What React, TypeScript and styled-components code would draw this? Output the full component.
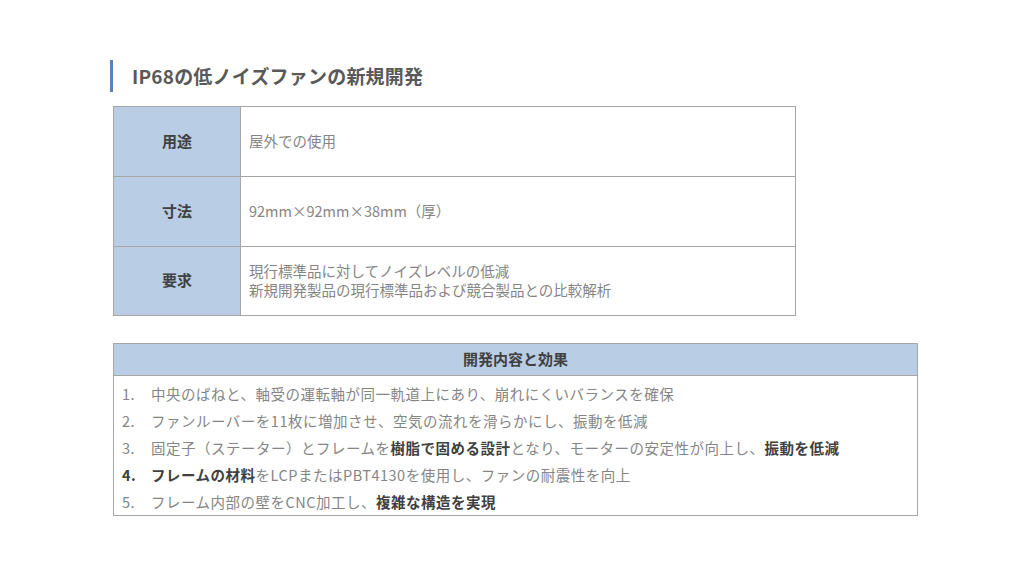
import React from 'react';
import styled, { createGlobalStyle } from 'styled-components';

const GlobalStyle = createGlobalStyle`
    html, body {
        margin: 0;
        padding: 0;
        background: #ffffff;
    }
    body {
        font-family: "Noto Sans CJK JP", "Noto Sans", sans-serif;
    }
`;

const Page = styled.div`
    display: flex;
    flex-direction: column;
    align-items: flex-start;
    width: 1024px;
    height: 576px;
    box-sizing: border-box;
    padding: 60px 0 0 110px;
    background: #ffffff;
`;

const Title = styled.h1`
    margin: 0;
    height: 32px;
    display: flex;
    align-items: center;
    padding: 0 0 2px 19px;
    box-sizing: border-box;
    border-left: 3px solid #5b83bb;
    font-size: 19px;
    font-weight: bold;
    color: #595959;
    letter-spacing: 0.2px;
`;

const SpecTable = styled.div`
    margin: 14px 0 0 3px;
    width: 683px;
    display: grid;
    grid-template-columns: 127px 1fr;
    border: 1px solid #a6a6a6;
    box-sizing: border-box;
`;

const Label = styled.div<{ last?: boolean }>`
    height: ${p => (p.last ? '68px' : '70px')};
    display: flex;
    align-items: center;
    justify-content: center;
    padding-bottom: 3px;
    box-sizing: border-box;
    background: #b9cde5;
    border-right: 1px solid #a6a6a6;
    border-bottom: ${p => (p.last ? 'none' : '1px solid #a6a6a6')};
    font-size: 15px;
    font-weight: bold;
    color: #404040;
`;

const Value = styled.div<{ last?: boolean }>`
    height: ${p => (p.last ? '68px' : '70px')};
    display: flex;
    flex-direction: column;
    justify-content: center;
    padding: 0 0 3px 8px;
    box-sizing: border-box;
    border-bottom: ${p => (p.last ? 'none' : '1px solid #a6a6a6')};
    font-size: 14.5px;
    line-height: 19px;
    color: #858585;
`;

const EffectBox = styled.div`
    margin: 27px 0 0 3px;
    width: 805px;
    border: 1px solid #a6a6a6;
    box-sizing: border-box;
`;

const EffectHeader = styled.div`
    height: 32px;
    display: flex;
    align-items: center;
    justify-content: center;
    padding-bottom: 2px;
    box-sizing: border-box;
    background: #b9cde5;
    border-bottom: 1px solid #a6a6a6;
    font-size: 15px;
    font-weight: bold;
    color: #404040;
`;

const EffectList = styled.ol`
    list-style: none;
    margin: 0;
    padding: 4px 0 0 0;
`;

const EffectItem = styled.li`
    display: flex;
    height: 27px;
    align-items: center;
    padding-left: 8px;
    font-size: 14.5px;
    letter-spacing: 0.5px;
    color: #858585;
`;

const Num = styled.span<{ strong?: boolean }>`
    width: 29px;
    flex-shrink: 0;
    font-weight: ${p => (p.strong ? 'bold' : 'normal')};
    color: ${p => (p.strong ? '#404040' : '#858585')};
`;

const B = styled.b`
    font-weight: bold;
    color: #404040;
`;

const specs = [
    { label: '用途', lines: ['屋外での使用'] },
    { label: '寸法', lines: ['92mm×92mm×38mm（厚）'] },
    {
        label: '要求',
        lines: ['現行標準品に対してノイズレベルの低減', '新規開発製品の現行標準品および競合製品との比較解析'],
    },
];

export default function App() {
    return (
        <>
            <GlobalStyle />
            <Page>
                <Title>IP68の低ノイズファンの新規開発</Title>
                <SpecTable>
                    {specs.map((s, idx) => (
                        <React.Fragment key={s.label}>
                            <Label last={idx === specs.length - 1}>{s.label}</Label>
                            <Value last={idx === specs.length - 1}>
                                {s.lines.map(l => <span key={l}>{l}</span>)}
                            </Value>
                        </React.Fragment>
                    ))}
                </SpecTable>
                <EffectBox>
                    <EffectHeader>開発内容と効果</EffectHeader>
                    <EffectList>
                        <EffectItem>
                            <Num>1.</Num>
                            <span>中央のばねと、軸受の運転軸が同一軌道上にあり、崩れにくいバランスを確保</span>
                        </EffectItem>
                        <EffectItem>
                            <Num>2.</Num>
                            <span>ファンルーバーを11枚に増加させ、空気の流れを滑らかにし、振動を低減</span>
                        </EffectItem>
                        <EffectItem>
                            <Num>3.</Num>
                            <span>
                                固定子（ステーター）とフレームを<B>樹脂で固める設計</B>となり、モーターの安定性が向上し、<B>振動を低減</B>
                            </span>
                        </EffectItem>
                        <EffectItem>
                            <Num strong>4.</Num>
                            <span>
                                <B>フレームの材料</B>をLCPまたはPBT4130を使用し、ファンの耐震性を向上
                            </span>
                        </EffectItem>
                        <EffectItem>
                            <Num>5.</Num>
                            <span>
                                フレーム内部の壁をCNC加工し、<B>複雑な構造を実現</B>
                            </span>
                        </EffectItem>
                    </EffectList>
                </EffectBox>
            </Page>
        </>
    );
}
